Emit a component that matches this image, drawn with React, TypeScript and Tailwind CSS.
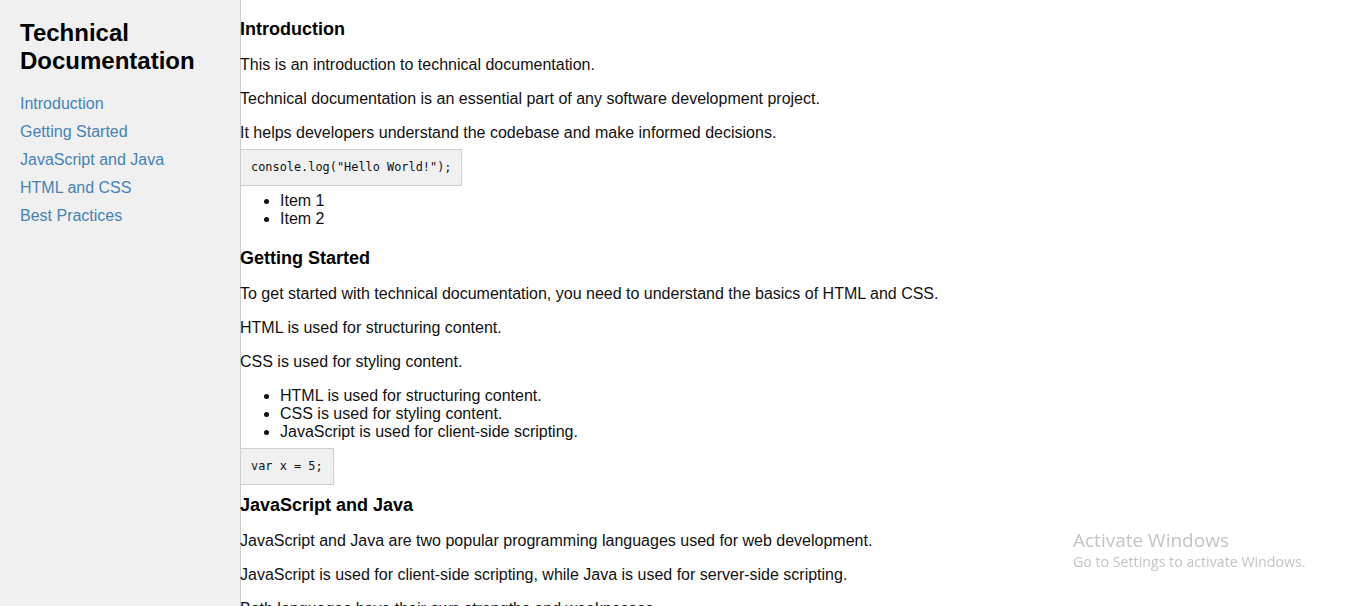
import React from 'react'

const nav = ['Introduction', 'Getting Started', 'JavaScript and Java', 'HTML and CSS', 'Best Practices']

function Code({ children, className = '' }: { children: React.ReactNode; className?: string }) {
  return (
    <pre
      className={`inline-block bg-[#f0f0f0] border border-[#cfcfcf] px-[10px] py-[10px] text-[11.9px] leading-[15px] text-[#111] ${className}`}
      style={{ fontFamily: '"DejaVu Sans Mono", "Liberation Mono", monospace' }}
    >
      {children}
    </pre>
  )
}

export default function App() {
  return (
    <div
      className="relative flex min-h-screen bg-white text-[#111]"
      style={{ fontFamily: '"Liberation Sans", Arial, sans-serif' }}
    >
      {/* Sidebar */}
      <nav className="w-[241px] shrink-0 bg-[#f0f0f0] border-r border-[#cccccc] pl-[20px] pt-[19px]">
        <h1 className="text-[24px] leading-[28px] font-bold text-black">
          Technical
          <br />
          Documentation
        </h1>
        <ul className="mt-[15px]">
          {nav.map(item => (
            <li key={item}>
              <a href="#" className="block text-[16px] leading-[28px] text-[#4682b4]">
                {item}
              </a>
            </li>
          ))}
        </ul>
      </nav>

      {/* Content */}
      <main className="-ml-px flex-1 text-[16px] leading-[18px]">
        <section>
          <h2 className="mt-[19px] text-[18px] leading-[21px] font-bold text-black">Introduction</h2>
          <p className="mt-[16px]">This is an introduction to technical documentation.</p>
          <p className="mt-[16px]">Technical documentation is an essential part of any software development project.</p>
          <p className="mt-[16px]">It helps developers understand the codebase and make informed decisions.</p>
          <div className="mt-[7px]">
            <Code>console.log("Hello World!");</Code>
          </div>
          <ul className="mt-[6px] list-disc pl-[40px]">
            <li>Item 1</li>
            <li>Item 2</li>
          </ul>
        </section>

        <section>
          <h2 className="mt-[20px] text-[18px] leading-[21px] font-bold text-black">Getting Started</h2>
          <p className="mt-[16px]">To get started with technical documentation, you need to understand the basics of HTML and CSS.</p>
          <p className="mt-[16px]">HTML is used for structuring content.</p>
          <p className="mt-[16px]">CSS is used for styling content.</p>
          <ul className="mt-[16px] list-disc pl-[40px]">
            <li>HTML is used for structuring content.</li>
            <li>CSS is used for styling content.</li>
            <li>JavaScript is used for client-side scripting.</li>
          </ul>
          <div className="mt-[7px]">
            <Code>var x = 5;</Code>
          </div>
        </section>

        <section>
          <h2 className="mt-[10px] text-[18px] leading-[21px] font-bold text-black">JavaScript and Java</h2>
          <p className="mt-[16px]">JavaScript and Java are two popular programming languages used for web development.</p>
          <p className="mt-[16px]">JavaScript is used for client-side scripting, while Java is used for server-side scripting.</p>
          <p className="mt-[16px]">Both languages have their own strengths and weaknesses.</p>
        </section>

        <section>
          <h2 className="mt-[20px] text-[18px] leading-[21px] font-bold text-black">HTML and CSS</h2>
          <p className="mt-[16px]">HTML and CSS are the building blocks of every web page.</p>
          <p className="mt-[16px]">HTML describes the structure, CSS describes the presentation.</p>
        </section>

        <section className="pb-[40px]">
          <h2 className="mt-[20px] text-[18px] leading-[21px] font-bold text-black">Best Practices</h2>
          <p className="mt-[16px]">Keep your documentation short, clear and up to date.</p>
        </section>
      </main>

      {/* Windows watermark */}
      <div
        className="fixed left-[1073px] top-[528px] text-[#c4c4c4] pointer-events-none"
        style={{ fontFamily: '"Open Sans", "Noto Sans", sans-serif' }}
      >
        <div className="text-[19px] leading-[24px]">Activate Windows</div>
        <div className="text-[14.2px] leading-[20px]">Go to Settings to activate Windows.</div>
      </div>
    </div>
  )
}
